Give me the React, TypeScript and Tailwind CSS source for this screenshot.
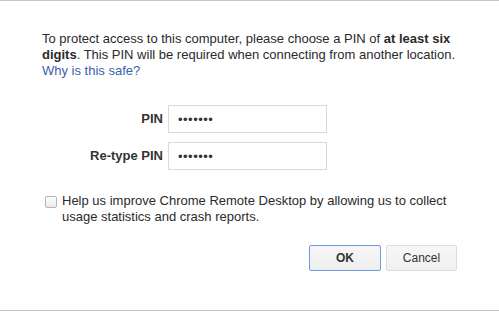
export default function App() {
  return (
    <div
      className="flex h-[311px] w-[499px] flex-col border-y border-[#c4c4c4] bg-white text-[13px] leading-4 text-[#2a2a2a]"
      style={{ fontFamily: '"Liberation Sans", Arial, sans-serif' }}
    >
      <p className="mx-[42px] mt-[30px]">
        To protect access to this computer, please choose a PIN of <b>at least six digits</b>. This PIN will be
        required when connecting from another location.{" "}
        <a href="#" className="text-[#3b5eae]">
          Why is this safe?
        </a>
      </p>

      <div className="mx-[42px] mt-[26px] flex flex-col gap-[9px]">
        {["PIN", "Re-type PIN"].map((label) => (
          <div key={label} className="flex items-center gap-[5px]">
            <span className="w-[121px] text-right font-bold text-[#333]">{label}</span>
            <div className="flex h-[28px] w-[159px] items-center border border-[#d9d9d9] pl-[9px] text-[13px] leading-none tracking-[0.5px] text-[#333]">
              •••••••
            </div>
          </div>
        ))}
      </div>

      <label className="mx-[42px] mt-[23px] flex items-start gap-[5px] pl-[3px]">
        <span className="mt-[3px] h-[12px] w-[12px] shrink-0 rounded-[2px] border border-[#b5b5b5] bg-gradient-to-b from-[#fdfdfd] to-[#ececec]" />
        <span>
          Help us improve Chrome Remote Desktop by allowing us to collect usage statistics and crash reports.
        </span>
      </label>

      <div className="mr-[42px] mt-[20px] flex justify-end gap-[5px]">
        <button
          type="button"
          className="h-[26px] w-[72px] rounded-[2px] border border-[#6d9be0] bg-gradient-to-b from-[#f7f7f7] to-[#eeeeee] text-[12px] font-bold text-[#333]"
        >
          OK
        </button>
        <button
          type="button"
          className="h-[26px] w-[71px] rounded-[2px] border border-[#dcdcdc] bg-gradient-to-b from-[#f7f7f7] to-[#f0f0f0] text-[12px] text-[#333]"
        >
          Cancel
        </button>
      </div>
    </div>
  );
}
